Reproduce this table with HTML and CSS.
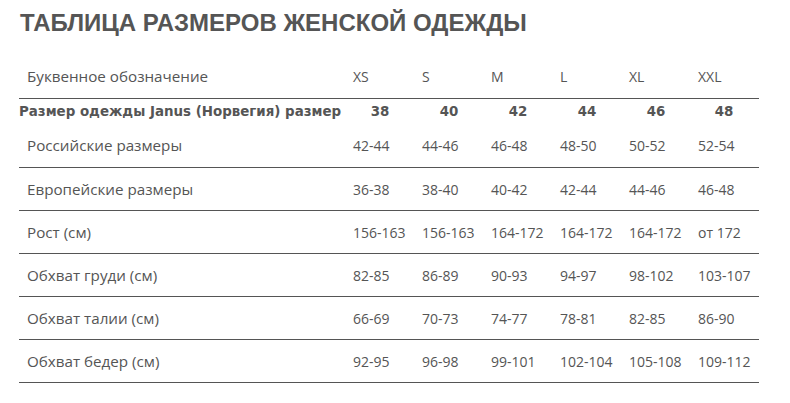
FILE: index.html
```html
<!DOCTYPE html>
<html lang="ru">
<head>
<meta charset="utf-8">
<link rel="stylesheet" href="styles.css">
</head>
<body>
<h1 class="title">ТАБЛИЦА РАЗМЕРОВ ЖЕНСКОЙ ОДЕЖДЫ</h1>
<table class="sizes">
  <colgroup>
    <col class="c-label"><col class="c-val"><col class="c-val"><col class="c-val"><col class="c-val"><col class="c-val"><col class="c-last">
  </colgroup>
  <tr class="head">
    <td class="label">Буквенное обозначение</td><td>XS</td><td>S</td><td>M</td><td>L</td><td>XL</td><td>XXL</td>
  </tr>
  <tr class="bold">
    <td class="label">Размер одежды Janus (Норвегия) размер</td><td>38</td><td>40</td><td>42</td><td>44</td><td>46</td><td>48</td>
  </tr>
  <tr class="row first">
    <td class="label">Российские размеры</td><td>42-44</td><td>44-46</td><td>46-48</td><td>48-50</td><td>50-52</td><td>52-54</td>
  </tr>
  <tr class="row">
    <td class="label">Европейские размеры</td><td>36-38</td><td>38-40</td><td>40-42</td><td>42-44</td><td>44-46</td><td>46-48</td>
  </tr>
  <tr class="row">
    <td class="label">Рост (см)</td><td>156-163</td><td>156-163</td><td>164-172</td><td>164-172</td><td>164-172</td><td>от 172</td>
  </tr>
  <tr class="row">
    <td class="label">Обхват груди (см)</td><td>82-85</td><td>86-89</td><td>90-93</td><td>94-97</td><td>98-102</td><td>103-107</td>
  </tr>
  <tr class="row">
    <td class="label">Обхват талии (см)</td><td>66-69</td><td>70-73</td><td>74-77</td><td>78-81</td><td>82-85</td><td>86-90</td>
  </tr>
  <tr class="row">
    <td class="label">Обхват бедер (см)</td><td>92-95</td><td>96-98</td><td>99-101</td><td>102-104</td><td>105-108</td><td>109-112</td>
  </tr>
</table>
</body>
</html>
```

FILE: styles.css
```css
html, body {
  margin: 0;
  padding: 0;
  background: #fff;
}
body {
  padding: 8px 0 0 19px;
  color: #555;
  font-family: "Open Sans", "DejaVu Sans", sans-serif;
}
.title {
  margin: 0 0 0 1px;
  font-family: "Liberation Sans", Arial, sans-serif;
  font-weight: bold;
  font-size: 24px;
  line-height: 30px;
  color: #555;
}
.sizes {
  margin-top: 16px;
  border-collapse: collapse;
  table-layout: fixed;
  width: 740px;
}
.c-label { width: 328px; }
.c-val { width: 69px; }
.c-last { width: 67px; }
.sizes td {
  padding: 0 0 0 6px;
  font-size: 14px;
  color: #555;
  white-space: nowrap;
  vertical-align: middle;
}
.sizes td.label {
  padding-left: 8px;
  font-size: 15.2px;
}
.head td {
  height: 44px;
  border-bottom: 1px solid #555;
}
.bold td {
  height: 24px;
  font-family: "DejaVu Sans", Verdana, sans-serif;
  font-weight: bold;
  font-size: 13.4px;
  text-align: center;
  padding: 0 3px 0 0;
}
.bold td.label {
  text-align: left;
  padding-left: 0;
  font-size: 13.4px;
}
.row td {
  height: 42px;
  border-bottom: 1px solid #555;
}
.row.first td {
  height: 44px;
}
```
